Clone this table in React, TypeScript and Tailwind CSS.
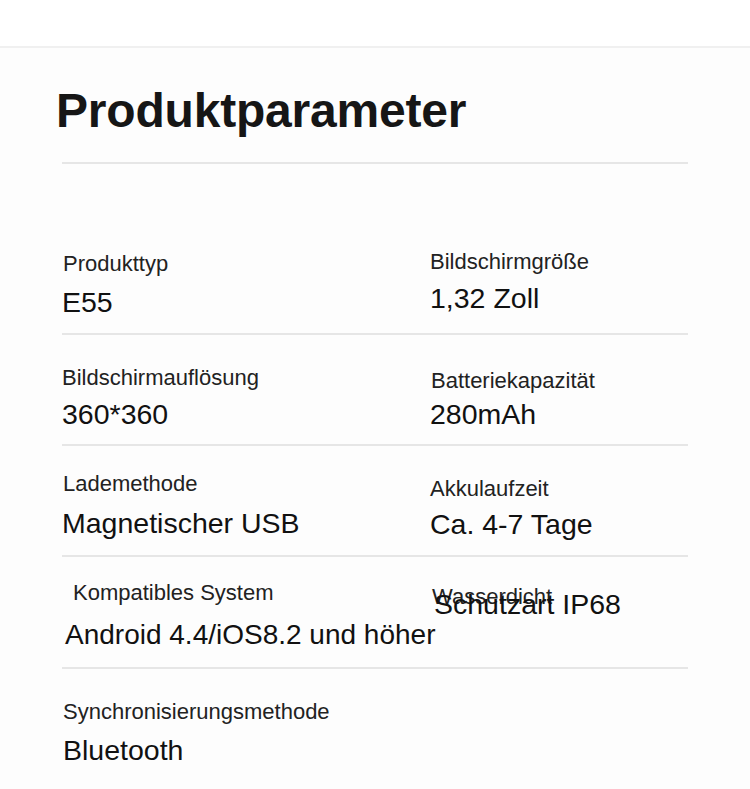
const rows = [
  {
    h: "h-[171px]",
    left: { label: "Produkttyp", value: "E55", lt: "mt-[88px] ml-[1px]", vt: "mt-[9px]" },
    right: { label: "Bildschirmgröße", value: "1,32 Zoll", lt: "mt-[86px]", vt: "mt-[7px]" },
  },
  {
    h: "h-[111px]",
    left: { label: "Bildschirmauflösung", value: "360*360", lt: "mt-[31px]", vt: "mt-[7px]" },
    right: { label: "Batteriekapazität", value: "280mAh", lt: "mt-[34px] ml-[1px]", vt: "mt-[4px]" },
  },
  {
    h: "h-[111px]",
    left: { label: "Lademethode", value: "Magnetischer USB", lt: "mt-[26px] ml-[1px]", vt: "mt-[10px]" },
    right: { label: "Akkulaufzeit", value: "Ca. 4-7 Tage", lt: "mt-[31px]", vt: "mt-[6px]" },
  },
  {
    h: "h-[112px]",
    left: {
      label: "Kompatibles System",
      value: "Android 4.4/iOS8.2 und höher",
      lt: "mt-[24px] ml-[11px]",
      vt: "mt-[13px] ml-[3px] text-[28px]",
    },
    right: { label: "Wasserdicht", value: "Schutzart IP68", lt: "mt-[28px] ml-[2px]", vt: "mt-[-22px] ml-[4px]" },
  },
];

type Cell = { label: string; value: string; lt: string; vt: string };

function Param({ cell }: { cell: Cell }) {
  return (
    <div className="flex flex-col whitespace-nowrap">
      <div className={`${cell.lt} text-[22px] leading-[24px] text-[#222]`}>{cell.label}</div>
      <div className={`text-[28.5px] leading-[34px] text-[#111] ${cell.vt}`}>{cell.value}</div>
    </div>
  );
}

export default function App() {
  return (
    <div className="w-[750px] h-[789px] overflow-hidden bg-white font-['Liberation_Sans',Arial,sans-serif]">
      <div className="h-[46px] bg-white" />
      <div className="h-[743px] border-t-2 border-[#f0f0f0] bg-[#fdfdfd] px-[62px]">
        <h1 className="mt-[39px] ml-[-6px] text-[48px] leading-[48px] font-bold text-[#161616] tracking-[-0.2px]">
          Produktparameter
        </h1>
        <div className="mt-[27px] h-[2px] bg-[#e6e6e6]" />

        {rows.map((row) => (
          <div key={row.left.label} className={`${row.h} border-b-2 border-[#e6e6e6] grid grid-cols-[368px_1fr]`}>
            <Param cell={row.left} />
            <Param cell={row.right} />
          </div>
        ))}

        <div className="flex flex-col">
          <div className="mt-[31px] ml-[1px] text-[22px] leading-[24px] text-[#222]">Synchronisierungsmethode</div>
          <div className="mt-[9px] ml-[1px] text-[28.5px] leading-[34px] text-[#111]">Bluetooth</div>
        </div>
      </div>
    </div>
  );
}
